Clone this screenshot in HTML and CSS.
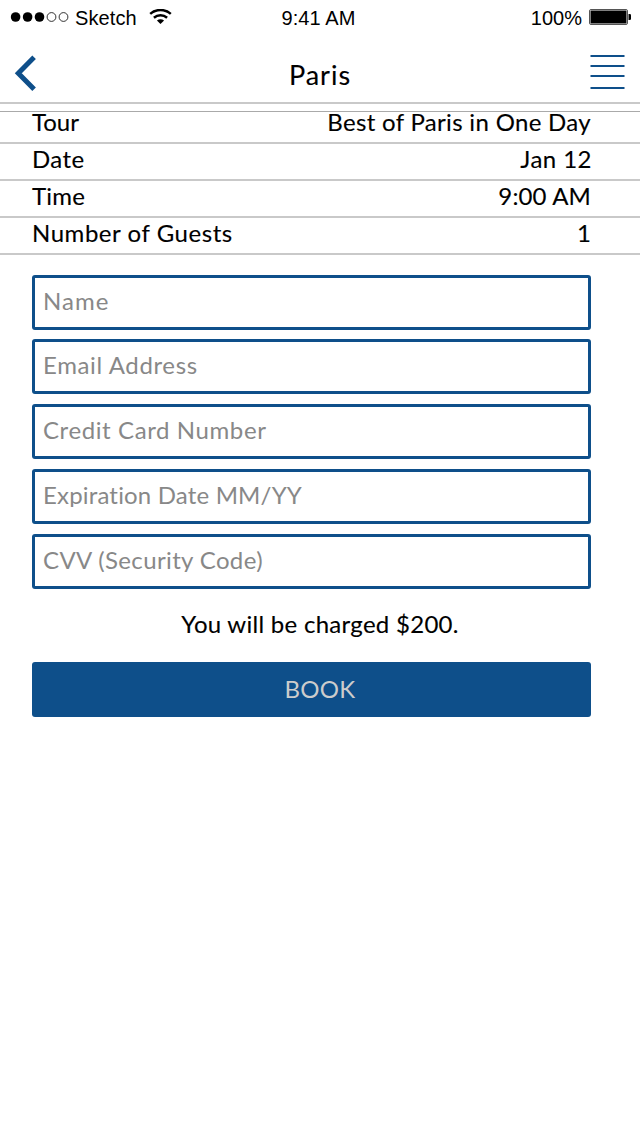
FILE: index.html
```
<!DOCTYPE html>
<html lang="en">
<head>
<meta charset="utf-8">
<title>Paris</title>
<link rel="stylesheet" href="styles.css">
</head>
<body>
<div class="status">
  <div class="status-left">
    <svg class="signal" width="60" height="12" viewBox="0 0 60 12">
      <circle cx="5.6" cy="6" r="4.8"/><circle cx="17.6" cy="6" r="4.8"/><circle cx="29.5" cy="6" r="4.8"/>
      <circle class="hollow" cx="41.5" cy="6" r="4.4"/><circle class="hollow" cx="53.5" cy="6" r="4.4"/>
    </svg>
    <span class="carrier">Sketch</span>
    <svg class="wifi" width="24" height="16" viewBox="0 0 24 16">
      <path class="arc" d="M1.2 4.9a15.6 15.6 0 0 1 20.6 0M4.9 8.7a10.2 10.2 0 0 1 13.2 0"/>
      <path d="M7.9 11.6a6 6 0 0 1 7.2 0L11.5 15z"/>
    </svg>
  </div>
  <span class="clock">9:41 AM</span>
  <div class="status-right">
    <span>100%</span>
    <svg width="42" height="16" viewBox="0 0 42 16">
      <rect class="shell" x=".5" y=".5" width="38" height="15" rx="1.5"/>
      <rect x="1.5" y="1.5" width="36" height="13" rx=".5"/>
      <path d="M39.5 5h1.2q1.3 0 1.3 1.3v3.4q0 1.3-1.3 1.3h-1.2z"/>
    </svg>
  </div>
</div>
<header class="nav">
  <svg class="back" width="24" height="37" viewBox="0 0 24 37"><path d="M20.1 2.2L4.3 18.2L20.1 34.2"/></svg>
  <h1 class="title">Paris</h1>
  <svg class="menu" width="35" height="34" viewBox="0 0 35 34"><path d="M.5 1h34M.5 11h34M.5 21h34M.5 33h34"/></svg>
</header>
<main>
  <dl class="summary">
    <div class="row row-tour"><dt>Tour</dt><dd>Best of Paris in One Day</dd></div>
    <div class="row row-date"><dt>Date</dt><dd>Jan 12</dd></div>
    <div class="row row-time"><dt>Time</dt><dd>9:00 AM</dd></div>
    <div class="row row-guests"><dt>Number of Guests</dt><dd>1</dd></div>
  </dl>
  <form class="form">
    <div class="field name"><span>Name</span></div>
    <div class="field email"><span>Email Address</span></div>
    <div class="field card"><span>Credit Card Number</span></div>
    <div class="field expiry"><span>Expiration Date MM/YY</span></div>
    <div class="field cvv"><span>CVV (Security Code)</span></div>
    <p class="charge">You will be charged $200.</p>
    <button class="book" type="button">BOOK</button>
  </form>
</main>
</body>
</html>
```
FILE: styles.css
```
* { box-sizing: border-box; }
body {
  margin: 0;
  background: #fff;
  color: #000;
  font: 24px/29px Lato, sans-serif;
}
svg { display: block; flex: none; }

.status {
  display: grid;
  grid-template-columns: 1fr auto 1fr;
  height: 36px;
  padding: 0 9px 0 10px;
  font: 20px/36px "Liberation Sans", Arial, sans-serif;
}
.status-left { display: flex; }
.signal { margin-top: 11px; }
.hollow { fill: none; stroke: #000; stroke-width: .8; }
.carrier { margin-left: 5px; letter-spacing: .1px; }
.wifi { margin: 9px 0 0 12px; }
.arc { fill: none; stroke: #000; stroke-width: 2.5; }
.clock { margin: 0 1px 0 -3px; letter-spacing: .1px; }
.status-right { display: flex; justify-content: flex-end; gap: 7px; }
.status-right svg { margin-top: 9px; }
.shell { fill: none; stroke: #555; }

.nav {
  display: grid;
  grid-template-columns: 1fr auto 1fr;
  height: 68px;
  padding: 0 15px 0 14px;
  border-bottom: 2px solid #c9c9c9;
}
.back { margin-top: 19px; fill: none; stroke: #0e4f8a; stroke-width: 5; }
.title {
  margin: 23px 0 0 1px;
  font-size: 27px;
  line-height: 32px;
  font-weight: 400;
  letter-spacing: 1px;
  -webkit-text-stroke: .12px #000;
}
.menu { justify-self: end; margin-top: 19px; stroke: #0e4f8a; stroke-width: 2; }

.summary { margin: 7px 0 0; border-top: 1px solid #aaa; }
.row {
  display: flex;
  justify-content: space-between;
  height: 37px;
  padding: 0 49px 0 32px;
  border-bottom: 2px solid #c9c9c9;
  -webkit-text-stroke: .12px #000;
}
.row dd { margin: 0; }
.row-tour { height: 32px; line-height: 19px; }
.row-tour dd { letter-spacing: .32px; }
.row-date dt { letter-spacing: .4px; }
.row-date dd { margin-right: -1px; letter-spacing: .45px; }
.row-time dt { letter-spacing: .2px; }
.row-time dd { letter-spacing: .15px; }
.row-guests dt { letter-spacing: .55px; }

.form { display: flex; flex-direction: column; padding: 20px 49px 0 32px; }
.field {
  height: 55px;
  margin-bottom: 10px;
  padding: 8px 7px 0 8px;
  border: 3px solid #0e4f8a;
  border-radius: 3px;
  color: #888;
}
/* the text box of a field ends just under the baseline */
.field span { display: block; line-height: 29px; clip-path: inset(0 0 2px); }
.name { margin-bottom: 9px; letter-spacing: 1px; }
.email { letter-spacing: .63px; }
.card { letter-spacing: .6px; }
.expiry { letter-spacing: .17px; }
.cvv { letter-spacing: .36px; }
.charge {
  margin: 10px -17px 24px 0;
  text-align: center;
  letter-spacing: .28px;
  -webkit-text-stroke: .12px #000;
}
.book {
  height: 55px;
  padding: 0 0 2px 17px;
  border: 0;
  border-radius: 3px;
  background: #0e4f8a;
  color: #ccc;
  font: 24px/53px Lato, sans-serif;
  letter-spacing: .3px;
}
```
